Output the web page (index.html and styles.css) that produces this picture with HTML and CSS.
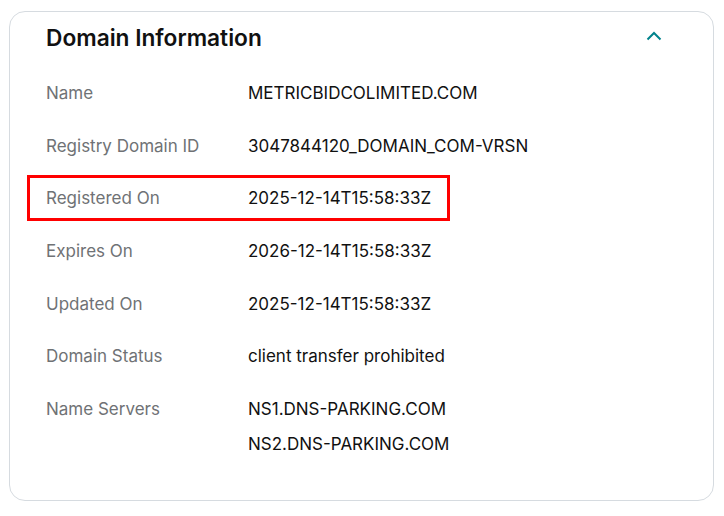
FILE: index.html
```html
<!DOCTYPE html>
<html lang="en">
<head>
<meta charset="UTF-8">
<meta name="viewport" content="width=device-width, initial-scale=1.0">
<title>Domain Information</title>
<link rel="stylesheet" href="styles.css">
</head>
<body>

<div class="card">
    <!-- Cabecera -->
    <div class="card-header">
        <h2>Domain Information</h2>
        <svg class="chevron" width="16" height="10" viewBox="0 0 16 10">
            <path d="M1.5 8.5 L8 2 L14.5 8.5" fill="none" stroke="#00838c" stroke-width="2"/>
        </svg>
    </div>

    <!-- Datos del dominio -->
    <div class="info">
        <div class="row">
            <div class="label">Name</div>
            <div class="value">METRICBIDCOLIMITED.COM</div>
        </div>
        <div class="row">
            <div class="label">Registry Domain ID</div>
            <div class="value">3047844120_DOMAIN_COM-VRSN</div>
        </div>
        <div class="row marked">
            <div class="label">Registered On</div>
            <div class="value">2025-12-14T15:58:33Z</div>
        </div>
        <div class="row">
            <div class="label">Expires On</div>
            <div class="value">2026-12-14T15:58:33Z</div>
        </div>
        <div class="row">
            <div class="label">Updated On</div>
            <div class="value">2025-12-14T15:58:33Z</div>
        </div>
        <div class="row">
            <div class="label">Domain Status</div>
            <div class="value">client transfer prohibited</div>
        </div>
        <div class="row">
            <div class="label">Name Servers</div>
            <div class="value servers">
                <div>NS1.DNS-PARKING.COM</div>
                <div>NS2.DNS-PARKING.COM</div>
            </div>
        </div>
    </div>
</div>

</body>
</html>
```

FILE: styles.css
```css
/* Estilos */
body {
    font-family: Inter, "Liberation Sans", Arial, sans-serif;
    background-color: #fff;
    margin: 0;
    padding: 11px 10px 15px 9px;
    color: #111;
}

.card {
    border: 1px solid #d6dbe0;
    border-radius: 16px;
    padding: 11px 51px 46px 36px;
}

.card-header {
    display: flex;
    justify-content: space-between;
    align-items: center;
    height: 30px;
}

.card-header h2 {
    margin: 0;
    font-size: 22.7px;
    font-weight: 600;
    line-height: 30px;
    color: #111;
}

.chevron {
    display: block;
    margin-top: -5px;
}

.info {
    margin-top: 30px;
    display: flex;
    flex-direction: column;
    gap: 32.67px;
}

.row {
    display: flex;
    font-size: 17px;
    line-height: 20px;
}

.label {
    width: 202px;
    flex-shrink: 0;
    color: #6f7275;
}

.value {
    color: #111;
}

.servers {
    display: flex;
    flex-direction: column;
    gap: 15px;
}

.row.marked {
    position: relative;
    width: max-content;
}

.row.marked::after {
    content: "";
    position: absolute;
    left: -19px;
    right: -19px;
    top: -13px;
    bottom: -13px;
    border: 3px solid #ff0000;
}
```
